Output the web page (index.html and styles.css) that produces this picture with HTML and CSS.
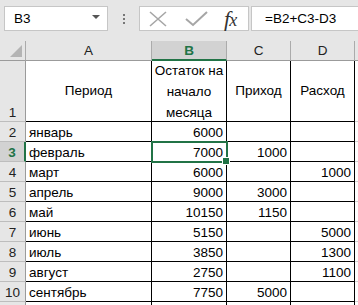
FILE: index.html
```html
<!DOCTYPE html>
<html lang="ru">
<head>
    <meta charset="UTF-8">
    <title>Остаток на начало месяца</title>
    <link rel="stylesheet" href="styles.css">
</head>
<body>

    <div class="formula-bar">
        <div class="name-box">
            <span>B3</span>
            <span class="arrow"></span>
        </div>
        <div class="dots">
            <span></span><span></span><span></span>
        </div>
        <div class="fx-box">
            <svg class="icon" width="22" height="16" viewBox="0 0 22 16">
                <path d="M2 1 L18 15 M18 1 L2 15" stroke="#a6a6a6" stroke-width="1.6" fill="none"/>
            </svg>
            <svg class="icon" width="24" height="16" viewBox="0 0 24 16">
                <path d="M1 8 L8 14 L22 1" stroke="#a6a6a6" stroke-width="2" fill="none"/>
            </svg>
            <span class="fx">f<i>x</i></span>
        </div>
        <div class="formula">=B2+C3-D3</div>
    </div>

    <div class="sheet">
        <!-- column headers -->
        <div class="corner"><span class="tri"></span></div>
        <div class="col-head">A</div>
        <div class="col-head active">B</div>
        <div class="col-head">C</div>
        <div class="col-head">D</div>
        <div class="col-head last"></div>

        <!-- row 1 -->
        <div class="row-head tall">1</div>
        <div class="cell title">Период</div>
        <div class="cell wrap">Остаток на начало месяца</div>
        <div class="cell title">Приход</div>
        <div class="cell title">Расход</div>
        <div class="cell empty"></div>
    </div>

    <script>
        const rows = [
            ['январь', 6000, '', ''],
            ['февраль', 7000, 1000, ''],
            ['март', 6000, '', 1000],
            ['апрель', 9000, 3000, ''],
            ['май', 10150, 1150, ''],
            ['июнь', 5150, '', 5000],
            ['июль', 3850, '', 1300],
            ['август', 2750, '', 1100],
            ['сентябрь', 7750, 5000, '']
        ];

        const sheet = document.querySelector('.sheet');

        rows.forEach((row, i) => {
            const num = i + 2;
            const head = document.createElement('div');
            head.className = 'row-head' + (num === 3 ? ' active' : '');
            head.textContent = num;
            sheet.appendChild(head);

            row.forEach((value, j) => {
                const cell = document.createElement('div');
                cell.className = j === 0 ? 'cell' : 'cell num';
                if (num === 3 && j === 1) cell.classList.add('selected');
                cell.textContent = value;
                sheet.appendChild(cell);
            });

            const rest = document.createElement('div');
            rest.className = 'cell empty';
            sheet.appendChild(rest);
        });

        // row 11, only its top shows
        const tail = document.createElement('div');
        tail.className = 'row-head';
        sheet.appendChild(tail);
        for (let j = 0; j < 5; j++) {
            const cell = document.createElement('div');
            cell.className = j === 4 ? 'cell empty' : 'cell';
            sheet.appendChild(cell);
        }
    </script>

</body>
</html>
```

FILE: styles.css
```css
* {
    box-sizing: border-box;
}
body {
    margin: 0;
    padding: 0;
    width: 358px;
    height: 305px;
    overflow: hidden;
    background-color: #e6e6e6;
    font-family: "Liberation Sans", Arial, sans-serif;
    font-size: 13.5px;
    color: #000;
}
.formula-bar {
    display: flex;
    align-items: center;
    height: 41px;
    padding: 6px 0 10px 4px;
}
.name-box {
    display: flex;
    align-items: center;
    justify-content: space-between;
    width: 104px;
    height: 25px;
    padding: 0 7px 0 9px;
    background-color: #fff;
    border: 1px solid #c6c6c6;
    font-size: 13.5px;
}
.arrow {
    width: 0;
    height: 0;
    border-left: 4px solid transparent;
    border-right: 4px solid transparent;
    border-top: 4px solid #555;
    margin-top: -4px;
}
.dots {
    display: flex;
    flex-direction: column;
    gap: 2px;
    width: 31px;
    align-items: center;
}
.dots span {
    width: 2px;
    height: 2px;
    background-color: #777;
}
.fx-box {
    display: flex;
    align-items: center;
    width: 110px;
    height: 25px;
    padding-left: 8px;
    background-color: #fff;
    border: 1px solid #c6c6c6;
}
.icon {
    display: block;
}
.fx-box .icon:first-child {
    margin-right: 15px;
}
.fx {
    margin-left: 15px;
    font-family: "Liberation Serif", "Times New Roman", serif;
    font-style: italic;
    font-size: 22px;
    color: #333;
    letter-spacing: -1px;
}
.fx i {
    font-size: 18px;
}
.formula {
    flex: 1;
    height: 25px;
    margin-left: 2px;
    padding-left: 13px;
    line-height: 23px;
    background-color: #fff;
    border: 1px solid #c6c6c6;
    border-right: none;
}
.sheet {
    display: grid;
    grid-template-columns: 26px 126px 75px 64px 64px 4px;
    grid-template-rows: 20px 61px repeat(9, 20px) 4px;
    background-color: #fff;
}
.corner {
    position: relative;
    background-color: #e6e6e6;
    border-right: 1px solid #ababab;
    border-bottom: 1px solid #9b9b9b;
}
.tri {
    position: absolute;
    right: 3px;
    bottom: 3px;
    width: 0;
    height: 0;
    border-left: 12px solid transparent;
    border-bottom: 12px solid #b4b4b4;
}
.col-head {
    display: flex;
    align-items: center;
    justify-content: center;
    background-color: #e6e6e6;
    border-right: 1px solid #ababab;
    border-bottom: 1px solid #9b9b9b;
    color: #222;
}
.col-head.active {
    background-color: #d2d2d2;
    border-bottom: 2px solid #217346;
    color: #217346;
    font-weight: bold;
}
.col-head.last {
    border-right: none;
}
.row-head {
    display: flex;
    align-items: flex-end;
    justify-content: center;
    padding-bottom: 1px;
    background-color: #e6e6e6;
    border-right: 1px solid #9b9b9b;
    border-bottom: 1px solid #bdbdbd;
    color: #222;
}
.row-head.active {
    background-color: #d2d2d2;
    border-right: 2px solid #217346;
    color: #217346;
    font-weight: bold;
}
.cell {
    display: flex;
    align-items: flex-end;
    padding: 0 3px 1px 3px;
    border-right: 1px solid #000;
    border-bottom: 1px solid #000;
    white-space: nowrap;
    overflow: hidden;
}
.cell.num {
    justify-content: flex-end;
}
.cell.empty {
    border-right: none;
    border-bottom: 1px solid #d4d4d4;
}
.cell.title {
    align-items: center;
    justify-content: center;
}
.cell.wrap {
    align-items: center;
    justify-content: center;
    text-align: center;
    white-space: normal;
    line-height: 21px;
    padding: 0 1px;
}
.cell.selected {
    position: relative;
    overflow: visible;
    outline: 2px solid #217346;
    outline-offset: -1px;
}
.cell.selected::after {
    content: "";
    position: absolute;
    right: -4px;
    bottom: -4px;
    width: 6px;
    height: 6px;
    background-color: #217346;
    border: 1px solid #fff;
}
```
